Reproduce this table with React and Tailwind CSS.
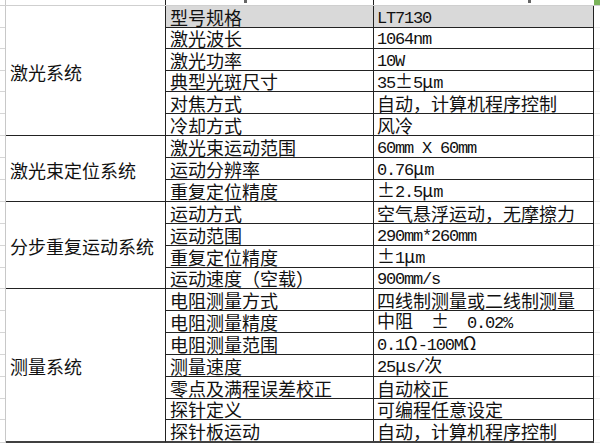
import React from "react";

const groups = [
  {
    name: "激光系统",
    rows: [
      ["型号规格", "LT7130", "h-[22px]", true],
      ["激光波长", "1064nm", "h-[21px]"],
      ["激光功率", "10W", "h-[22px]"],
      ["典型光斑尺寸", "35±5μm", "h-[21px]"],
      ["对焦方式", "自动，计算机程序控制", "h-[22px]"],
      ["冷却方式", "风冷", "h-[22px]"],
    ],
  },
  {
    name: "激光束定位系统",
    rows: [
      ["激光束运动范围", "60mm X 60mm", "h-[22px]"],
      ["运动分辨率", "0.76μm", "h-[22px]"],
      ["重复定位精度", "±2.5μm", "h-[22px]"],
    ],
  },
  {
    name: "分步重复运动系统",
    rows: [
      ["运动方式", "空气悬浮运动，无摩擦力", "h-[22px]"],
      ["运动范围", "290mm*260mm", "h-[22px]"],
      ["重复定位精度", "±1μm", "h-[22px]"],
      ["运动速度（空载）", "900mm/s", "h-[21px]"],
    ],
  },
  {
    name: "测量系统",
    last: true,
    rows: [
      ["电阻测量方式", "四线制测量或二线制测量", "h-[22px]"],
      ["电阻测量精度", "中阻  ±  0.02%", "h-[22px]"],
      ["电阻测量范围", "0.1Ω-100MΩ", "h-[22px]"],
      ["测量速度", "25μs/次", "h-[22px]"],
      ["零点及满程误差校正", "自动校正", "h-[22px]"],
      ["探针定义", "可编程任意设定", "h-[21px]"],
      ["探针板运动", "自动，计算机程序控制", "h-[23px]"],
    ],
  },
];

function Txt({ s }) {
  const parts = s.split(/([\x20-\x7e]+)/).filter((p) => p.length);
  return (
    <span className="whitespace-pre leading-[18px]">
      {parts.map((p, i) =>
        /^[\x20-\x7e]+$/.test(p) ? (
          <span
            key={i}
            className="font-['Liberation_Mono',monospace] text-[17px] tracking-[-1.2px]"
          >
            {p}
          </span>
        ) : (
          <span key={i} className="text-[18px]">
            {p}
          </span>
        )
      )}
    </span>
  );
}

export default function App() {
  const allRows = groups.flatMap((g) => g.rows);
  return (
    <div className="w-[600px] h-[447px] bg-white overflow-hidden flex flex-col text-[#111] font-['Noto_Sans_CJK_SC',sans-serif]">
      {/* row above (spreadsheet) */}
      <div className="h-[6px] shrink-0 flex border-b border-[#cfcfcf]">
        <div className="w-[6px] border-r border-[#c8c8c8]" />
        <div className="w-[160px] border-r border-[#222]" />
        <div className="w-[208px] border-r border-[#222] flex items-start">
          <div className="ml-[78px] w-[3px] h-[3px] bg-[#666]" />
        </div>
        <div className="w-[220px] flex items-start">
          <div className="ml-[154px] w-[3px] h-[3px] bg-[#666]" />
        </div>
        <div className="w-[6px] bg-[#7cb55b]" />
      </div>

      <div className="flex">
        {/* left spreadsheet stub */}
        <div className="w-[6px] border-r border-[#c8c8c8] flex flex-col">
          {allRows.map((r, i) => (
            <div key={i} className={`${r[2]} border-b border-[#d6d6d6]`} />
          ))}
        </div>

        {/* table */}
        <div className="w-[588px] flex flex-col">
          {groups.map((g, gi) => (
            <div key={gi} className="flex">
              <div
                className={`w-[160px] shrink-0 border-r border-[#222] flex items-center pl-[4px] pt-[3px] ${
                  g.last ? "border-b-2 border-b-[#404040]" : "border-b"
                }`}
              >
                <Txt s={g.name} />
              </div>
              <div className="flex flex-col w-[428px]">
                {g.rows.map((r, ri) => {
                  const isLast = g.last && ri === g.rows.length - 1;
                  return (
                    <div
                      key={ri}
                      className={`${r[2]} flex ${r[3] ? "bg-[#d9d9d9]" : ""} ${
                        isLast ? "border-b-2 border-b-[#404040]" : "border-b border-[#222]"
                      }`}
                    >
                      <div className="w-[208px] border-r border-[#222] flex items-center pl-[4px] pt-[1px]">
                        <Txt s={r[0]} />
                      </div>
                      <div className="w-[220px] border-r border-[#222] flex items-center pl-[3px] pt-[1px]">
                        <Txt s={r[1]} />
                      </div>
                    </div>
                  );
                })}
              </div>
            </div>
          ))}
        </div>

        {/* right stub */}
        <div className="w-[6px] flex flex-col">
          {allRows.map((r, i) => (
            <div key={i} className={`${r[2]} border-b border-[#ececec]`} />
          ))}
        </div>
      </div>
    </div>
  );
}
